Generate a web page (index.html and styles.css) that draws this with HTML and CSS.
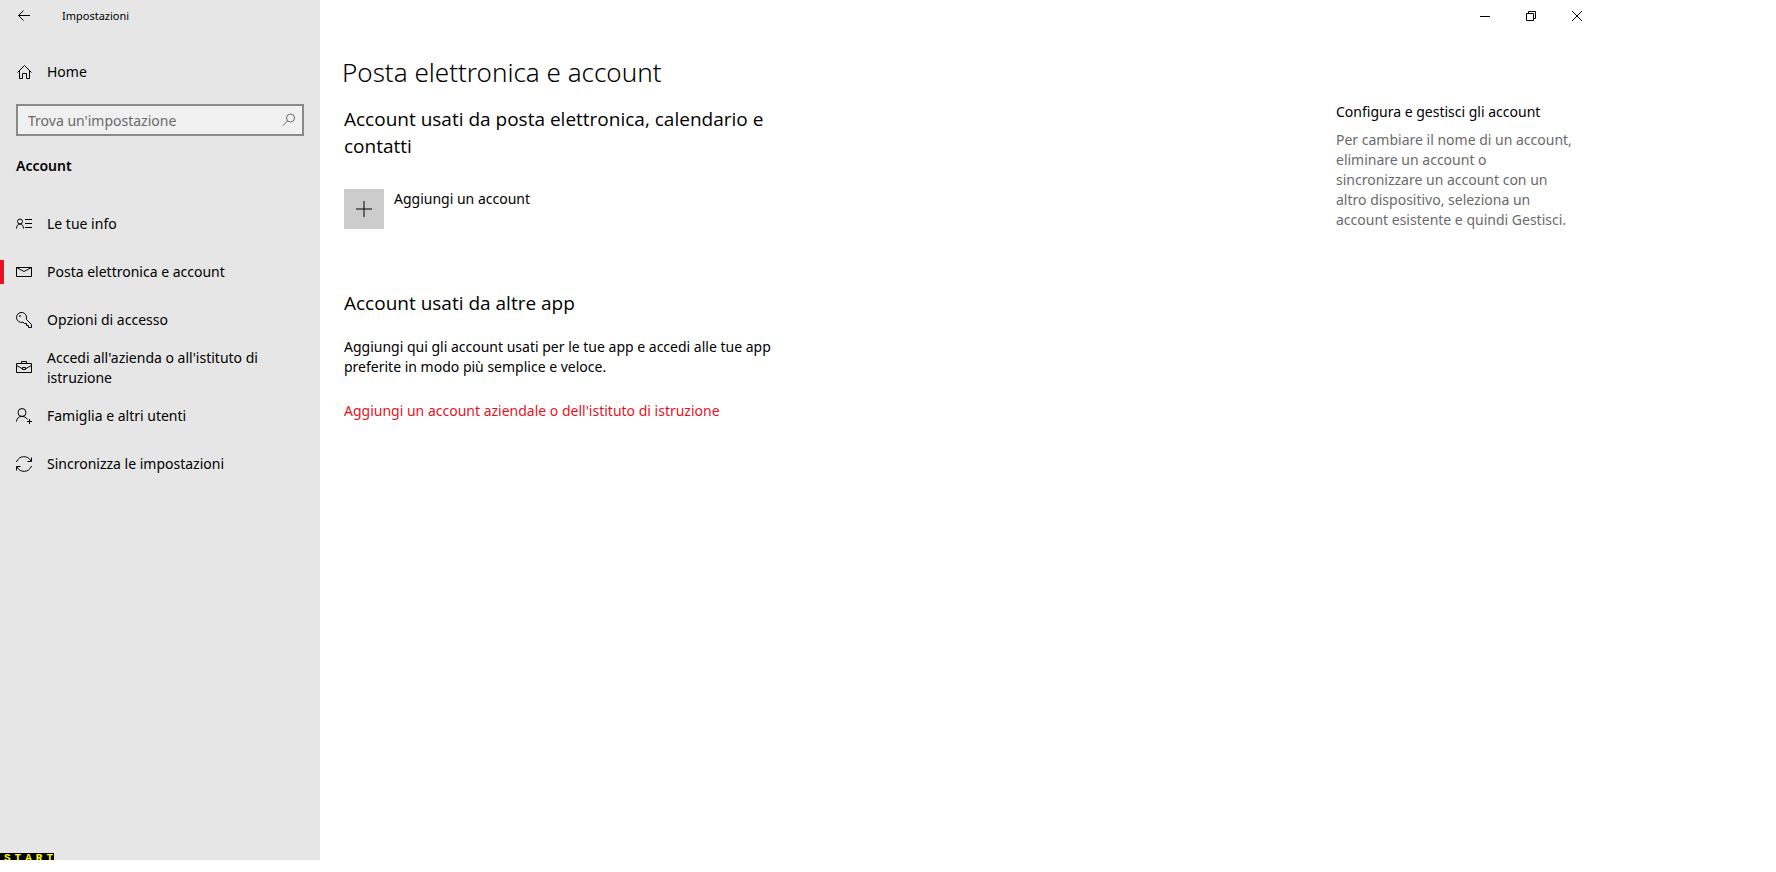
FILE: index.html
```html
<!DOCTYPE html>
<html lang="it">
<head>
    <meta charset="UTF-8">
    <meta name="viewport" content="width=device-width, initial-scale=1.0">
    <title>Impostazioni</title>
    <link rel="stylesheet" href="styles.css">
</head>
<body>
    <div class="window">

        <!-- Sidebar -->
        <div class="sidebar">
            <div class="titlebar">
                <button type="button" class="back-btn" aria-label="Indietro">
                    <svg class="icon" viewBox="0 0 16 16"><path d="M14 7.5H2.5M7.5 2.5l-5 5 5 5"/></svg>
                </button>
                <span class="app-name">Impostazioni</span>
            </div>

            <a href="#" class="home-link">
                <svg class="icon" viewBox="0 0 16 16"><path d="M1.5 8.5L8.5 1.5l7 7M3.5 7v7.5h3v-5h4v5h3V7"/></svg>
                Home
            </a>

            <form class="search">
                <input type="search" aria-label="Trova un'impostazione" placeholder="Trova un'impostazione">
                <svg class="icon search-icon" viewBox="0 0 16 16"><circle cx="9.5" cy="6" r="4"/><path d="M6.5 9L2 13.5"/></svg>
            </form>

            <h2 class="sidebar-title">Account</h2>

            <nav class="menu">
                <a href="#" class="menu-item">
                    <svg class="icon" viewBox="0 0 16 16"><circle cx="4" cy="5.5" r="2.5"/><path d="M.5 12.5c0-6 7-6 7 0M9 3.5h7M9 7.5h7M9 11.5h7"/></svg>
                    <span>Le tue info</span>
                </a>
                <a href="#" class="menu-item active">
                    <svg class="icon" viewBox="0 0 16 16"><path d="M.5 3.5h15v9H.5zM.5 3.5L8 7.5l7.5-4"/></svg>
                    <span>Posta elettronica e account</span>
                </a>
                <a href="#" class="menu-item">
                    <svg class="icon" viewBox="0 0 16 16"><path d="M10.2 7.2A5 5 0 1 0 7 10.2L8.500 11.500H10.500V13.500H12.500V15.500H15.500V12.500L10.200 7.200"/><circle cx="4" cy="4" r=".5"/></svg>
                    <span>Opzioni di accesso</span>
                </a>
                <a href="#" class="menu-item">
                    <svg class="icon" viewBox="0 0 16 16"><path d="M.5 3.5h15v9H.5zM5.500 3.500v-2h5v2M.5 5.500L6 8.500M15.500 5.500L10 8.500M6.500 7.500h3v2h-3z"/></svg>
                    <span>Accedi all'azienda o all'istituto di istruzione</span>
                </a>
                <a href="#" class="menu-item">
                    <svg class="icon" viewBox="0 0 16 16"><circle cx="6" cy="4.5" r="4"/><path d="M.5 13.5C1 7 9 7 11.500 11.500M13.500 11v5M11 13.500h5"/></svg>
                    <span>Famiglia e altri utenti</span>
                </a>
                <a href="#" class="menu-item">
                    <svg class="icon" viewBox="0 0 16 16"><path d="M.5 6C3-1 12-1 15 5M15.500 1.500v4h-4M15.500 10C13 17 4 17 1 11M.5 14.500v-4h4"/></svg>
                    <span>Sincronizza le impostazioni</span>
                </a>
            </nav>

            <button type="button" class="start-btn">START</button>
        </div>

        <!-- Content -->
        <div class="content">
            <div class="window-controls">
                <button type="button" aria-label="Riduci a icona"><svg class="icon" viewBox="0 0 16 16"><path d="M3 8.5h10"/></svg></button>
                <button type="button" aria-label="Ripristina"><svg class="icon" viewBox="0 0 16 16"><path d="M3.5 5.5h7v7h-7zM5.500 5.500v-2h7v7h-2"/></svg></button>
                <button type="button" aria-label="Chiudi"><svg class="icon" viewBox="0 0 16 16"><path d="M3 3l10 10M13 3L3 13"/></svg></button>
            </div>

            <div class="columns">
                <main>
                    <h1>Posta elettronica e account</h1>

                    <section>
                        <h2>Account usati da posta elettronica, calendario e contatti</h2>
                        <button type="button" class="add-account">
                            <span class="add-icon"><svg class="icon" viewBox="0 0 16 16"><path d="M8 0v16M0 8h16"/></svg></span>
                            Aggiungi un account
                        </button>
                    </section>

                    <section>
                        <h2>Account usati da altre app</h2>
                        <p>Aggiungi qui gli account usati per le tue app e accedi alle tue app preferite in modo più semplice e veloce.</p>
                        <a href="#" class="link">Aggiungi un account aziendale o dell'istituto di istruzione</a>
                    </section>
                </main>

                <aside>
                    <h3>Configura e gestisci gli account</h3>
                    <p>Per cambiare il nome di un account, eliminare un account o sincronizzare un account con un altro dispositivo, seleziona un account esistente e quindi Gestisci.</p>
                </aside>
            </div>
        </div>
    </div>
</body>
</html>
```

FILE: styles.css
```css
* {
    box-sizing: border-box;
}
body {
    margin: 0;
    background: #fff;
    color: #000;
    font-family: "Segoe UI", "Noto Sans", sans-serif;
    font-size: 14px;
    line-height: 20px;
}
h1, h2, h3, p {
    margin: 0;
}
a {
    color: inherit;
    text-decoration: none;
}
button {
    padding: 0;
    border: none;
    background: none;
    color: inherit;
    font: inherit;
    cursor: pointer;
}
.icon {
    flex: none;
    display: block;
    width: 16px;
    height: 16px;
    fill: none;
    stroke: currentColor;
}
.window {
    display: flex;
    max-width: 1600px;
    min-height: calc(100vh - 12px);
}

/* Sidebar */
.sidebar {
    position: relative;
    flex: none;
    width: 320px;
    background: #e6e6e6;
}
.titlebar {
    display: flex;
    align-items: center;
    height: 32px;
}
.back-btn {
    display: flex;
    align-items: center;
    justify-content: center;
    width: 48px;
    height: 32px;
}
.app-name {
    margin-left: 14px;
    font-size: 11px;
}
.home-link {
    display: flex;
    align-items: center;
    gap: 15px;
    height: 48px;
    margin-top: 16px;
    padding: 0 16px;
}
.search {
    position: relative;
    margin: 8px 16px 20px;
}
.search input {
    display: block;
    width: 100%;
    height: 32px;
    padding: 0 36px 0 10px;
    border: 2px solid #8a8a8a;
    border-radius: 0;
    background: #f0f0f0;
    font: inherit;
    appearance: none;
    outline: none;
}
.search input::placeholder {
    color: #6a6a6a;
}
.search-icon {
    position: absolute;
    top: 8px;
    right: 7px;
    color: #6a6a6a;
}
.sidebar-title {
    padding: 0 16px;
    font-size: 14px;
    font-weight: 600;
}
.menu {
    margin-top: 24px;
}
.menu-item {
    display: flex;
    align-items: center;
    gap: 15px;
    height: 48px;
    padding: 0 16px;
}
.menu-item.active {
    background: linear-gradient(#e81123, #e81123) left center / 4px 24px no-repeat;
}
.start-btn {
    position: absolute;
    left: 0;
    bottom: 0;
    width: 54px;
    height: 7px;
    padding-left: 4px;
    overflow: hidden;
    display: flex;
    align-items: flex-start;
    background: #000;
    color: #ff0;
    font: bold 11px/11px "Liberation Mono", monospace;
    letter-spacing: 4px;
}

/* Content */
.content {
    flex: 1;
}
.window-controls {
    display: flex;
    justify-content: flex-end;
}
.window-controls button {
    display: flex;
    align-items: center;
    justify-content: center;
    width: 46px;
    height: 32px;
}
.columns {
    display: flex;
    justify-content: space-between;
    padding: 20px 24px 24px;
}
main {
    max-width: 440px;
}
h1 {
    margin-bottom: 14px;
    margin-left: -2px;
    font-size: 26px;
    font-weight: 300;
    line-height: 40px;
    white-space: nowrap;
}
section {
    margin-bottom: 61px;
}
section h2 {
    font-family: "Segoe UI", "Open Sans", sans-serif;
    font-size: 19px;
    font-weight: 400;
    line-height: 27px;
}
.add-account {
    display: flex;
    align-items: flex-start;
    gap: 10px;
    margin-top: 29px;
}
.add-icon {
    display: flex;
    align-items: center;
    justify-content: center;
    width: 40px;
    height: 40px;
    background: #ccc;
}
section p {
    margin: 20px 0 24px;
}
.link {
    color: #e81123;
}
aside {
    width: 240px;
    padding-top: 50px;
}
aside h3 {
    margin-bottom: 8px;
    font-size: 14px;
    font-weight: 400;
}
aside p {
    color: #6a6a6a;
}
```
